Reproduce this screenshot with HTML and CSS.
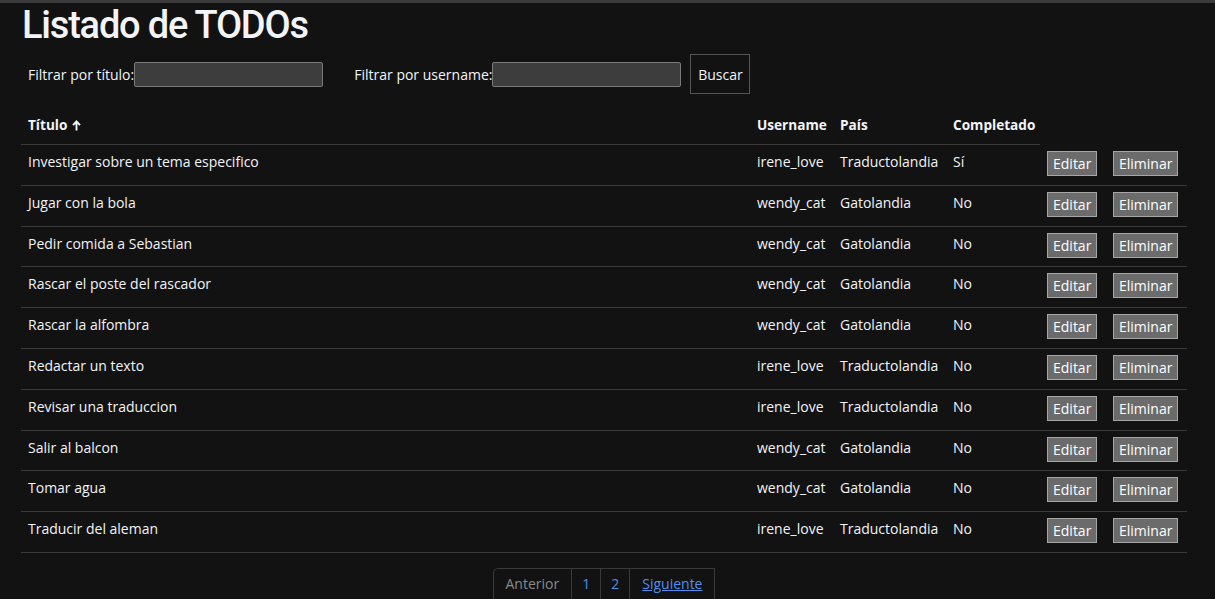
FILE: index.html
```html
<!DOCTYPE html>
<html lang="es">
<head>
<meta charset="utf-8">
<title>Listado de TODOs</title>
<link rel="stylesheet" href="styles.css">
</head>
<body>
<div class="topbar"></div>
<main class="page">
  <h1 class="title">Listado de TODOs</h1>
  <form class="filters">
    <label class="filter">Filtrar por título:<input class="field" type="text"></label>
    <label class="filter">Filtrar por username:<input class="field" type="text"></label>
    <button class="search" type="button">Buscar</button>
  </form>
  <table class="todos">
    <colgroup>
      <col class="c-title"><col class="c-user"><col class="c-country"><col class="c-done"><col class="c-edit"><col class="c-del">
    </colgroup>
    <thead>
      <tr><th>Título <svg class="sort" width="9" height="11" viewBox="0 0 9 11"><path d="M4.5 10.5V1.8M1 5.2L4.5 1.5 8 5.2" fill="none" stroke="currentColor" stroke-width="1.9"/></svg></th><th>Username</th><th>País</th><th>Completado</th></tr>
    </thead>
    <tbody>
      <tr><td>Investigar sobre un tema especifico</td><td>irene_love</td><td>Traductolandia</td><td>Sí</td><td class="btn-cell"><button class="act">Editar</button></td><td class="btn-cell"><button class="act">Eliminar</button></td></tr>
      <tr><td>Jugar con la bola</td><td>wendy_cat</td><td>Gatolandia</td><td>No</td><td class="btn-cell"><button class="act">Editar</button></td><td class="btn-cell"><button class="act">Eliminar</button></td></tr>
      <tr><td>Pedir comida a Sebastian</td><td>wendy_cat</td><td>Gatolandia</td><td>No</td><td class="btn-cell"><button class="act">Editar</button></td><td class="btn-cell"><button class="act">Eliminar</button></td></tr>
      <tr><td>Rascar el poste del rascador</td><td>wendy_cat</td><td>Gatolandia</td><td>No</td><td class="btn-cell"><button class="act">Editar</button></td><td class="btn-cell"><button class="act">Eliminar</button></td></tr>
      <tr><td>Rascar la alfombra</td><td>wendy_cat</td><td>Gatolandia</td><td>No</td><td class="btn-cell"><button class="act">Editar</button></td><td class="btn-cell"><button class="act">Eliminar</button></td></tr>
      <tr><td>Redactar un texto</td><td>irene_love</td><td>Traductolandia</td><td>No</td><td class="btn-cell"><button class="act">Editar</button></td><td class="btn-cell"><button class="act">Eliminar</button></td></tr>
      <tr><td>Revisar una traduccion</td><td>irene_love</td><td>Traductolandia</td><td>No</td><td class="btn-cell"><button class="act">Editar</button></td><td class="btn-cell"><button class="act">Eliminar</button></td></tr>
      <tr><td>Salir al balcon</td><td>wendy_cat</td><td>Gatolandia</td><td>No</td><td class="btn-cell"><button class="act">Editar</button></td><td class="btn-cell"><button class="act">Eliminar</button></td></tr>
      <tr><td>Tomar agua</td><td>wendy_cat</td><td>Gatolandia</td><td>No</td><td class="btn-cell"><button class="act">Editar</button></td><td class="btn-cell"><button class="act">Eliminar</button></td></tr>
      <tr><td>Traducir del aleman</td><td>irene_love</td><td>Traductolandia</td><td>No</td><td class="btn-cell"><button class="act">Editar</button></td><td class="btn-cell"><button class="act">Eliminar</button></td></tr>
    </tbody>
  </table>
  <nav class="pager">
    <span class="pg disabled">Anterior</span>
    <a class="pg num" href="#">1</a>
    <a class="pg num" href="#">2</a>
    <a class="pg next" href="#">Siguiente</a>
  </nav>
</main>
</body>
</html>
```
FILE: styles.css
```css
html, body {
  margin: 0;
  padding: 0;
  background: #121212;
  color: #f2f4f7;
  font-family: "Open Sans", "Noto Sans", sans-serif;
  font-size: 14px;
  overflow: hidden;
}

.topbar {
  height: 3px;
  background: #3c3c3c;
}

.page {
  width: 1166px;
  padding: 0 21px;
}

.title {
  margin: 0;
  font-family: Roboto, "Open Sans", sans-serif;
  font-size: 38px;
  font-weight: 500;
  line-height: 44px;
  letter-spacing: -1.2px;
  padding-left: 1px;
}

.filters {
  display: flex;
  align-items: center;
  margin-top: 7px;
  padding-left: 7px;
  height: 40px;
}

.filter {
  display: flex;
  align-items: center;
  margin-right: 31px;
}

.filter:nth-child(2) {
  margin-right: 9px;
}

.field {
  width: 189px;
  height: 25px;
  box-sizing: border-box;
  background: #3d3d3d;
  border: 1px solid #7a7a7a;
  border-radius: 2px;
  color: #fff;
  margin: 0;
  margin-top: 1px;
}

.search {
  width: 60px;
  height: 40px;
  box-sizing: border-box;
  background: transparent;
  border: 1px solid #555;
  color: #f2f4f7;
  font-family: inherit;
  font-size: 14px;
  padding: 0;
}

.todos {
  margin-top: 10px;
  width: 1166px;
  border-collapse: collapse;
  table-layout: fixed;
}

.c-title { width: 729px; }
.c-user { width: 83px; }
.c-country { width: 113px; }
.c-done { width: 94px; }
.c-edit { width: 66px; }
.c-del { width: 81px; }

.todos th {
  text-align: left;
  font-weight: 700;
  font-size: 13.6px;
  height: 40px;
  padding: 0 7px;
  border-bottom: 1px solid #3a3a3a;
  white-space: nowrap;
}

.sort {
  vertical-align: -1px;
  margin-left: 1px;
}

.todos td {
  height: 32.8px;
  padding: 7px 7px 0;
  line-height: 19px;
  border-bottom: 1px solid #3a3a3a;
  white-space: nowrap;
  vertical-align: top;
}

.todos td.btn-cell {
  height: 33.8px;
  padding-top: 6px;
}

.act {
  display: block;
  background: #6b6b6b;
  border: 1px solid #a6a6a6;
  color: #fff;
  font-family: inherit;
  font-size: 14px;
  height: 25px;
  padding: 0 5px;
  margin: 0;
}

.pager {
  display: flex;
  justify-content: center;
  margin-top: 15px;
}

.pg {
  display: block;
  padding: 5px 12px 9px;
  border: 1px solid #3a3a3a;
  border-left: none;
  text-decoration: none;
  color: #4f8ff0;
  line-height: 20px;
}

.pg:first-child {
  border-left: 1px solid #3a3a3a;
  border-radius: 5px 0 0 5px;
}

.pg.disabled {
  color: #8a8a8a;
}

.pg.num {
  padding-left: 10px;
  padding-right: 10px;
}

.pg.next {
  text-decoration: underline;
}
```
